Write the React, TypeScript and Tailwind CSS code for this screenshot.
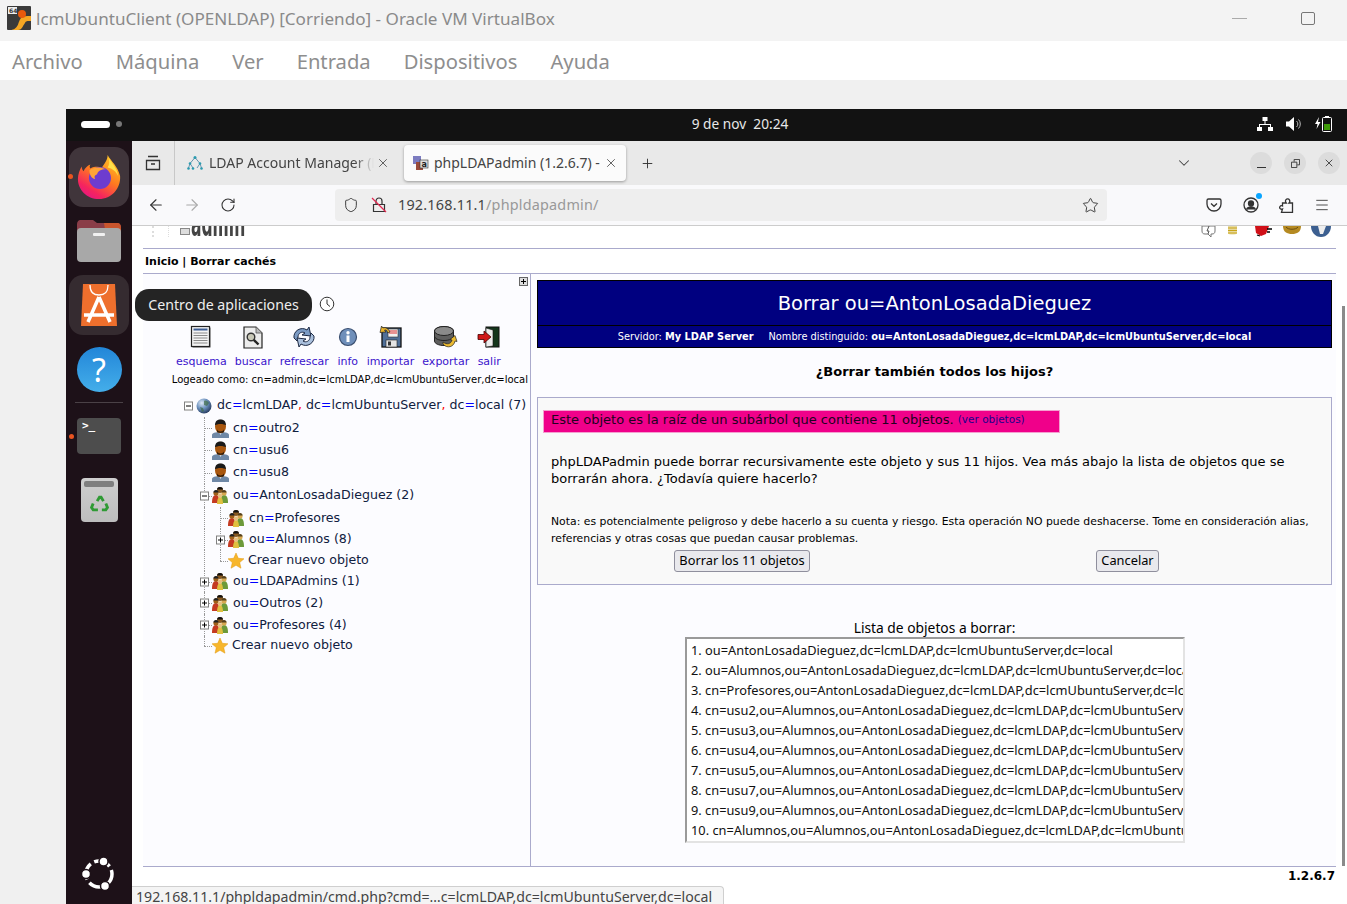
import { ArrowLeft, ArrowRight, ChevronDown, Menu, Plus, RotateCw, Shield, Star, X } from "lucide-react";

const deja = "font-['DejaVu_Sans',sans-serif]";
const ui = "font-['Noto_Sans',sans-serif]";

const menus = ["Archivo", "Máquina", "Ver", "Entrada", "Dispositivos", "Ayuda"];

const toolbarItems = [
  { label: "esquema", icon: SchemaIcon },
  { label: "buscar", icon: SearchDocIcon },
  { label: "refrescar", icon: RefreshIcon },
  { label: "info", icon: InfoIcon },
  { label: "importar", icon: ImportIcon },
  { label: "exportar", icon: ExportIcon },
  { label: "salir", icon: LogoutIcon },
];

const deleteList = [
  "1. ou=AntonLosadaDieguez,dc=lcmLDAP,dc=lcmUbuntuServer,dc=local",
  "2. ou=Alumnos,ou=AntonLosadaDieguez,dc=lcmLDAP,dc=lcmUbuntuServer,dc=local",
  "3. cn=Profesores,ou=AntonLosadaDieguez,dc=lcmLDAP,dc=lcmUbuntuServer,dc=local",
  "4. cn=usu2,ou=Alumnos,ou=AntonLosadaDieguez,dc=lcmLDAP,dc=lcmUbuntuServer,dc=local",
  "5. cn=usu3,ou=Alumnos,ou=AntonLosadaDieguez,dc=lcmLDAP,dc=lcmUbuntuServer,dc=local",
  "6. cn=usu4,ou=Alumnos,ou=AntonLosadaDieguez,dc=lcmLDAP,dc=lcmUbuntuServer,dc=local",
  "7. cn=usu5,ou=Alumnos,ou=AntonLosadaDieguez,dc=lcmLDAP,dc=lcmUbuntuServer,dc=local",
  "8. cn=usu7,ou=Alumnos,ou=AntonLosadaDieguez,dc=lcmLDAP,dc=lcmUbuntuServer,dc=local",
  "9. cn=usu9,ou=Alumnos,ou=AntonLosadaDieguez,dc=lcmLDAP,dc=lcmUbuntuServer,dc=local",
  "10. cn=Alumnos,ou=Alumnos,ou=AntonLosadaDieguez,dc=lcmLDAP,dc=lcmUbuntuServer,dc=local",
];

function SchemaIcon() {
  return (
    <svg width="24" height="24" viewBox="0 0 24 24">
      <rect x="3.500" y="2.500" width="18" height="20" fill="#555" />
      <rect x="2.500" y="1.500" width="18" height="20" fill="#f4f4f4" stroke="#222" strokeWidth="1.200" />
      <rect x="4.500" y="3.500" width="14" height="2" fill="#3f5f96" />
      <path d="M4.500 8h14M4.500 10.500h14M4.500 13h14M4.500 15.500h14M4.500 18h14" stroke="#8a8a8a" strokeWidth="1.100" />
    </svg>
  );
}

function SearchDocIcon() {
  return (
    <svg width="24" height="24" viewBox="0 0 24 24">
      <path d="M3 2h12l6 6v15H3z" fill="#ececec" stroke="#222" strokeWidth="1.200" />
      <path d="M15 2v6h6" fill="#bbb" stroke="#555" strokeWidth=".8" />
      <circle cx="10" cy="12" r="3.800" fill="#c9c9b8" stroke="#333" strokeWidth="1.400" />
      <path d="M12.800 14.800l4.700 4.700" stroke="#222" strokeWidth="2.400" />
    </svg>
  );
}

function RefreshIcon() {
  return (
    <svg width="24" height="24" viewBox="0 0 24 24">
      <path d="M2 13C1 6 9 1 15 5l2-3 2 9-9-1 3-2c-3-2-7 0-7 4l-1 4z" fill="#7c9bc4" stroke="#1e2a44" strokeWidth="1" />
      <path d="M22 11c1 7-7 12-13 8l-2 3-2-9 9 1-3 2c3 2 7 0 7-4l1-4z" fill="#a9bfdc" stroke="#1e2a44" strokeWidth="1" />
    </svg>
  );
}

function InfoIcon() {
  return (
    <svg width="22" height="22" viewBox="0 0 22 22">
      <circle cx="11" cy="11" r="8.500" fill="#6f8fba" stroke="#3b4f70" strokeWidth="1.200" />
      <rect x="9.500" y="9.500" width="3" height="6.500" fill="#fff" />
      <circle cx="11" cy="6.700" r="1.700" fill="#fff" />
    </svg>
  );
}

function ImportIcon() {
  return (
    <svg width="24" height="24" viewBox="0 0 24 24">
      <rect x="3" y="3" width="19" height="19" fill="#4f6f98" stroke="#111" strokeWidth="1.300" />
      <rect x="9" y="4" width="10" height="8" fill="#f2f2f2" stroke="#333" strokeWidth=".6" />
      <path d="M10 6h8M10 8h8" stroke="#d33" strokeWidth="1" />
      <rect x="7" y="15" width="11" height="7" fill="#e4e4e4" stroke="#222" strokeWidth=".6" />
      <rect x="9" y="16.500" width="3" height="4" fill="#333" />
      <path d="M11 7c-2-4-5-5-7-4L2.500 1 1 7.500l6-.5L5.500 5c2-.5 3 1 3 3z" fill="#e8b32b" stroke="#222" strokeWidth=".7" />
    </svg>
  );
}

function ExportIcon() {
  return (
    <svg width="26" height="24" viewBox="0 0 26 24">
      <ellipse cx="11" cy="6" rx="9.500" ry="4.500" fill="#8a8a8a" stroke="#222" />
      <path d="M1.500 6v10c0 2.500 4.200 4.500 9.500 4.500s9.500-2 9.500-4.500V6" fill="#5e5e5e" stroke="#222" />
      <ellipse cx="11" cy="6" rx="9.500" ry="4.500" fill="#8a8a8a" stroke="#222" />
      <path d="M1.500 11c0 2.500 4.200 4.500 9.500 4.500s9.500-2 9.500-4.500" fill="none" stroke="#222" />
      <path d="M10 17c4 3 8 2 9-2l-2-.5 5-4 2 6-2-.5c-1 6-8 8-12 3z" fill="#eab92f" stroke="#222" strokeWidth=".7" />
    </svg>
  );
}

function LogoutIcon() {
  return (
    <svg width="24" height="24" viewBox="0 0 24 24">
      <rect x="9" y="2" width="13" height="20" fill="#14361c" stroke="#111" />
      <path d="M9 3l7 2v16l-7 1z" fill="#ededed" stroke="#111" strokeWidth=".6" />
      <path d="M1 9.500h6V6l7 6-7 6v-3.500H1z" fill="#d01818" stroke="#400" strokeWidth=".8" />
    </svg>
  );
}

function UserIcon() {
  return (
    <svg width="17" height="19" viewBox="0 0 17 19">
      <path d="M0 19v-3c0-2 3-3 8.500-3S17 14 17 16v3z" fill="#6f88a6" />
      <path d="M7 13h3l-1.500 3z" fill="#e8eef4" />
      <ellipse cx="8.500" cy="7.500" rx="5.500" ry="6.800" fill="#a8560e" />
      <path d="M3 6.500C3 2 5.500.5 8.500.5S14 2 14 6.500c-2-2-9-2-11 0z" fill="#1a1a1a" />
      <path d="M5 10.500c1.500 2.500 5.500 2.500 7 0v2.500c-1.500 1.200-5.500 1.200-7 0z" fill="#3a2008" />
    </svg>
  );
}

function GroupIcon() {
  return (
    <svg width="16" height="17" viewBox="0 0 16 17">
      <circle cx="8" cy="3" r="3" fill="#8a5a20" />
      <path d="M5 2.500C5 .8 6.500 0 8 0s3 .8 3 2.500z" fill="#111" />
      <path d="M0 16c0-5 1-8 4-8s3 3 3 8z" fill="#c43a22" />
      <circle cx="4" cy="6" r="2.600" fill="#a06018" />
      <path d="M1.400 5.500C1.400 4 2.500 3 4 3s2.600 1 2.600 2.500z" fill="#222" />
      <path d="M9 16c0-5 0-8 3-8s4 3 4 8z" fill="#6d9a3a" />
      <circle cx="12" cy="6" r="2.600" fill="#d8a850" />
      <path d="M9.400 5.500C9.400 4 10.500 3 12 3s2.600 1 2.600 2.500z" fill="#55401c" />
      <path d="M5 17c0-4 1-7 3-7s3 3 3 7z" fill="#e0c040" />
      <circle cx="8" cy="8.500" r="2.300" fill="#e8c080" />
    </svg>
  );
}

function StarIcon() {
  return (
    <svg className="shrink-0" width="16" height="16" viewBox="0 0 16 16">
      <path d="M8 0l2.300 5.300 5.700.5-4.300 3.800 1.300 5.600L8 12.300 3 15.200l1.300-5.600L0 5.800l5.700-.5z" fill="#f7b62c" stroke="#e39a10" strokeWidth=".5" />
    </svg>
  );
}

function GlobeIcon() {
  return (
    <svg className="shrink-0" width="16" height="16" viewBox="0 0 16 16">
      <defs>
        <radialGradient id="globe" cx="35%" cy="30%" r="75%">
          <stop offset="0" stopColor="#dfe9f5" />
          <stop offset=".5" stopColor="#6e93c0" />
          <stop offset="1" stopColor="#24395c" />
        </radialGradient>
      </defs>
      <circle cx="8" cy="8" r="7.500" fill="url(#globe)" />
      <path d="M8 3c2-1 4 0 5 2l-2 3-3-1zM4 9l3 1 1 3-2 1z" fill="#3f6b46" opacity=".7" />
    </svg>
  );
}

function Expander({ open }: { open?: boolean }) {
  return (
    <span className="flex h-[9px] w-[9px] items-center justify-center border border-[#808080] bg-white">
      <svg width="7" height="7" viewBox="0 0 7 7">
        <path d={open ? "M1 3.500h5" : "M1 3.500h5M3.500 1v5"} stroke="#000" strokeWidth="1" />
      </svg>
    </span>
  );
}

// one column of the dotted tree guide
function Guide({ tee, last, expander, open }: { tee?: boolean; last?: boolean; expander?: boolean; open?: boolean }) {
  return (
    <div className="relative w-4 shrink-0 self-stretch">
      <div className={last ? "absolute left-[8px] top-0 h-1/2 border-l border-dotted border-[#999]" : "absolute left-[8px] top-0 bottom-0 border-l border-dotted border-[#999]"} />
      {tee && <div className="absolute left-[8px] top-1/2 w-[8px] border-t border-dotted border-[#999]" />}
      {expander && (
        <div className="absolute left-[4px] top-1/2 -translate-y-1/2">
          <Expander open={open} />
        </div>
      )}
    </div>
  );
}

function Dn({ attr, value, count }: { attr: string; value: string; count?: string }) {
  return (
    <span className="whitespace-nowrap">
      {attr}
      <span className="text-[#0000ff]">=</span>
      {value}
      {count && <span> {count}</span>}
    </span>
  );
}

function LdapTree() {
  return (
    <div className={`mt-[8px] text-[12.600px] text-[#102040] ${deja}`}>
      <div className="flex h-[23px] items-center">
        <div className="w-[37px] shrink-0" />
        <div className="relative h-full w-4 shrink-0">
          <div className="absolute left-[4px] top-1/2 -translate-y-1/2">
            <Expander open />
          </div>
        </div>
        <GlobeIcon />
        <span className="ml-[5px] whitespace-nowrap">
          dc<span className="text-[#0000ff]">=</span>lcmLDAP<span className="text-[#ff0000]">,</span> dc<span className="text-[#0000ff]">=</span>lcmUbuntuServer<span className="text-[#ff0000]">,</span> dc<span className="text-[#0000ff]">=</span>local (7)
        </span>
      </div>
      {[
        { text: "outro2", h: "h-[22px]" },
        { text: "usu6", h: "h-[22px]" },
        { text: "usu8", h: "h-[23px]" },
      ].map(r => (
        <div key={r.text} className={`flex items-center ${r.h}`}>
          <div className="w-[53px] shrink-0" />
          <Guide tee />
          <UserIcon />
          <span className="ml-[4px]">
            <Dn attr="cn" value={r.text} />
          </span>
        </div>
      ))}
      <div className="flex h-[23px] items-center">
        <div className="w-[53px] shrink-0" />
        <Guide tee expander open />
        <GroupIcon />
        <span className="ml-[5px]">
          <Dn attr="ou" value="AntonLosadaDieguez" count="(2)" />
        </span>
      </div>
      <div className="flex h-[22px] items-center">
        <div className="w-[53px] shrink-0" />
        <Guide />
        <Guide tee />
        <GroupIcon />
        <span className="ml-[5px]">
          <Dn attr="cn" value="Profesores" />
        </span>
      </div>
      <div className="flex h-[21px] items-center">
        <div className="w-[53px] shrink-0" />
        <Guide />
        <Guide tee expander />
        <GroupIcon />
        <span className="ml-[5px]">
          <Dn attr="ou" value="Alumnos" count="(8)" />
        </span>
      </div>
      <div className="flex h-[21px] items-center">
        <div className="w-[53px] shrink-0" />
        <Guide />
        <Guide tee last />
        <StarIcon />
        <span className="ml-[4px]">Crear nuevo objeto</span>
      </div>
      {[
        { value: "LDAPAdmins", count: "(1)", h: "h-[21px]" },
        { value: "Outros", count: "(2)", h: "h-[22px]" },
        { value: "Profesores", count: "(4)", h: "h-[22px]" },
      ].map(r => (
        <div key={r.value} className={`flex items-center ${r.h}`}>
          <div className="w-[53px] shrink-0" />
          <Guide tee expander />
          <GroupIcon />
          <span className="ml-[5px]">
            <Dn attr="ou" value={r.value} count={r.count} />
          </span>
        </div>
      ))}
      <div className="flex h-[19px] items-center">
        <div className="w-[53px] shrink-0" />
        <Guide tee last />
        <StarIcon />
        <span className="ml-[4px]">Crear nuevo objeto</span>
      </div>
    </div>
  );
}

function LeftPanel() {
  return (
    <div className="relative w-[388px] shrink-0 border-r border-[#aaaacc]">
      <div className="absolute right-[2px] top-[3px] flex h-[9px] w-[9px] items-center justify-center border border-[#666] bg-[#ddd]">
        <svg width="7" height="7" viewBox="0 0 7 7">
          <path d="M1 3.500h5M3.500 1v5" stroke="#000" />
        </svg>
      </div>
      <div className="flex h-[51px] items-end justify-end pb-[13px] pr-[195px]">
        <span className="mr-[8px] mb-[4px] h-[6px] w-[3px] bg-[#333]" />
        <svg width="16" height="16" viewBox="0 0 16 16" fill="#fff" stroke="#333" strokeWidth="1">
          <circle cx="8" cy="8" r="6.800" />
          <path d="M8 3.500V8l3 2.500" fill="none" />
        </svg>
      </div>
      <div className={`flex gap-2 pl-[33px] text-[11px] text-[#3a14cc] ${deja}`}>
        {toolbarItems.map(item => {
          const Icon = item.icon;
          return (
            <div key={item.label} className="flex flex-col items-center">
              <div className="flex h-[24px] items-center justify-center">
                <Icon />
              </div>
              <span className="mt-[6px] whitespace-nowrap leading-[13px]">{item.label}</span>
            </div>
          );
        })}
      </div>
      <div className={`mt-[5px] whitespace-nowrap pr-[2px] text-right text-[10px] leading-[13px] text-black ${deja}`}>
        Logeado como: cn=admin,dc=lcmLDAP,dc=lcmUbuntuServer,dc=local
      </div>
      <LdapTree />
    </div>
  );
}

function RightPanel() {
  return (
    <div className={`flex min-w-0 flex-1 flex-col pl-[6px] pr-[4px] pt-[6px] text-black ${deja}`}>
      <div className="border border-black bg-[#000080] text-white">
        <div className="flex h-[45px] items-center justify-center border-b border-black pt-[2px] text-[19.500px]">Borrar ou=AntonLosadaDieguez</div>
        <div className="flex h-[21px] items-center justify-center whitespace-nowrap pt-[2px] text-[9.800px]">
          <span>
            Servidor: <b>My LDAP Server</b>
          </span>
          <span className="ml-[15px]">
            Nombre distinguido: <b>ou=AntonLosadaDieguez,dc=lcmLDAP,dc=lcmUbuntuServer,dc=local</b>
          </span>
        </div>
      </div>
      <div className="mt-[16px] text-center text-[13px] font-bold leading-[16px]">¿Borrar también todos los hijos?</div>
      <div className="mt-[17px] h-[188px] border border-[#aaaacc] bg-[#f9f9f9] px-[5px] pt-[12px]">
        <div className="flex h-[23px] w-[517px] items-start border border-[#f4a0d0] bg-[#f0008a] pl-[7px] text-[13px] leading-[17px] text-[#200020]">
          Este objeto es la raíz de un subárbol que contiene 11 objetos.
          <span className="ml-[4px] text-[10.500px] text-[#1a008a]">(ver objetos)</span>
        </div>
        <p className="mt-[20px] pl-[8px] text-[13px] leading-[17px]">
          phpLDAPadmin puede borrar recursivamente este objeto y sus 11 hijos. Vea más abajo la lista de objetos que se borrarán ahora. ¿Todavía quiere hacerlo?
        </p>
        <p className="mt-[26px] pl-[8px] text-[10.850px] leading-[17px]">
          Nota: es potencialmente peligroso y debe hacerlo a su cuenta y riesgo. Esta operación NO puede deshacerse. Tome en consideración alias, referencias y otras cosas que puedan causar problemas.
        </p>
        <div className="mt-[3px] flex">
          <button className={`ml-[131px] h-[22px] w-[136px] rounded-[3px] border border-[#8f8f9d] bg-[#e9e9ed] text-[12.800px] ${ui}`}>Borrar los 11 objetos</button>
          <button className={`ml-[286px] h-[22px] w-[63px] rounded-[3px] border border-[#8f8f9d] bg-[#e9e9ed] text-[12.800px] ${ui}`}>Cancelar</button>
        </div>
      </div>
      <div className={`mt-[34px] text-center text-[13.800px] leading-[18px] ${ui}`}>Lista de objetos a borrar:</div>
      <div className={`ml-[148px] h-[206px] w-[500px] overflow-hidden border-2 border-b-[#e3e3e3] border-l-[#9a9a9a] border-r-[#e3e3e3] border-t-[#9a9a9a] bg-white pl-[4px] pt-[1px] text-[12.800px] leading-[20px] text-[#111] ${ui}`}>
        {deleteList.map(line => (
          <div key={line} className="whitespace-nowrap">
            {line}
          </div>
        ))}
      </div>
    </div>
  );
}

function FirefoxLogo() {
  return (
    <svg width="46" height="46" viewBox="0 0 48 48">
      <defs>
        <linearGradient id="ffBody" x1=".8" y1="0" x2=".2" y2="1">
          <stop offset="0" stopColor="#ffc928" />
          <stop offset=".45" stopColor="#ff7a1f" />
          <stop offset=".8" stopColor="#f5245e" />
          <stop offset="1" stopColor="#e31587" />
        </linearGradient>
      </defs>
      <path d="M33 1c3 6 11 12 13 22 1 13-9 24-22 24C11 47 2 37 2 26c0-5 2-10 4-13 0 3 1 4 2 5 1-3 4-6 7-7-1 2-1 3 0 4 4-2 8-2 12-1 3-4 6-8 6-13z" fill="url(#ffBody)" />
      <circle cx="25" cy="25" r="11.500" fill="#6d3ccf" />
      <path d="M14 17c4-3 11-4 17-1-5 0-8 2-9 5-3 1-3 3-2 5-4 0-6-5-6-9z" fill="#ffa436" />
      <path d="M34 4c3 6 9 10 10 19-2-5-6-8-11-9 2-3 2-6 1-10z" fill="#ffe04a" />
    </svg>
  );
}

function Dock() {
  return (
    <div className="flex w-[66px] shrink-0 flex-col items-center bg-[#1d1118]">
      <div className="relative mt-[6px] flex h-[60px] w-[60px] items-center justify-center rounded-[14px] bg-[#40353b]">
        <FirefoxLogo />
        <span className="absolute -left-[1px] top-[27px] h-[5px] w-[5px] rounded-full bg-[#e95420]" />
      </div>
      <svg className="mt-[13px]" width="46" height="42" viewBox="0 0 46 42">
        <path d="M1 5c0-3 1-5 4-5h12l4 3h20c3 0 4 2 4 5v8H1z" fill="#8a3d48" />
        <path d="M28 3h13c3 0 4 2 4 5v8H30z" fill="#c9552d" />
        <rect x="1" y="8" width="44" height="34" rx="4" fill="#a8a8a8" />
        <rect x="17" y="13" width="12" height="3" rx="1" fill="#f1f1f1" />
      </svg>
      <div className="mt-[13px] flex h-[60px] w-[60px] items-center justify-center rounded-[14px] bg-[#352b30]">
        <svg width="36" height="42" viewBox="0 0 36 42">
          <path d="M2 0h32l2 42H0z" fill="#ee6f2d" />
          <path d="M9 1c0 8 4 10 9 10s9-2 9-10" fill="none" stroke="#fff" strokeWidth="1.300" />
          <path d="M18 13L7 38M18 13l11 25M3 31h30" fill="none" stroke="#fff" strokeWidth="3.500" />
        </svg>
      </div>
      <div className="mt-[12px] flex h-[45px] w-[45px] items-center justify-center rounded-full bg-gradient-to-b from-[#2286d8] to-[#44aeea]">
        <span className={`text-[32px] leading-none text-white ${ui}`}>?</span>
      </div>
      <div className="mt-[10px] h-px w-[48px] bg-[#4a4146]" />
      <div className="relative mt-[15px] h-[36px] w-[44px] rounded-[4px] bg-[#4d4d4d]">
        <span className="absolute left-[5px] top-[1px] font-['DejaVu_Sans_Mono',monospace] text-[11px] font-bold leading-[14px] text-white">&gt;_</span>
        <span className="absolute -left-[8px] top-[16px] h-[5px] w-[5px] rounded-full bg-[#e95420]" />
      </div>
      <div className="mt-[24px] flex h-[44px] w-[37px] flex-col items-center rounded-[4px] bg-gradient-to-b from-[#cfcfcf] to-[#bdbdbd] pt-[3px]">
        <div className="h-[6px] w-[30px] rounded-[2px] bg-[#7f7f7f]" />
        <svg className="mt-[7px]" width="19" height="19" viewBox="0 0 24 24" fill="none" stroke="#2f9a34" strokeWidth="3.600">
          <path d="M9 9l3-5h2l3 5M20 12l2 5-2 3h-5M4 12l-2 5 2 3h6" />
        </svg>
      </div>
      <svg className="mb-[12px] mt-auto" width="36" height="36" viewBox="0 0 36 36">
        <circle cx="18" cy="18" r="13" fill="none" stroke="#fff" strokeWidth="3.500" strokeDasharray="17 4" strokeDashoffset="7" />
        <circle cx="22.500" cy="5.500" r="4.500" fill="#fff" stroke="#1d1118" strokeWidth="1.500" />
        <circle cx="5" cy="18" r="4.500" fill="#fff" stroke="#1d1118" strokeWidth="1.500" />
        <circle cx="24" cy="30" r="4.500" fill="#fff" stroke="#1d1118" strokeWidth="1.500" />
      </svg>
    </div>
  );
}

function BrowserTabs() {
  return (
    <div className={`flex h-[44px] items-center bg-[#e9e9e9] text-[14px] text-[#444] ${ui}`}>
      <div className="flex h-full w-[43px] items-center justify-center border-r border-[#c8c8c8]">
        <svg width="18" height="18" viewBox="0 0 18 18" fill="none" stroke="#333" strokeWidth="1.300">
          <path d="M4 2.500h10M2.500 6.500h13v9h-13zM7 10h4" />
        </svg>
      </div>
      <div className="flex h-full w-[229px] items-center pl-[12px]">
        <svg width="16" height="16" viewBox="0 0 16 16" fill="none" stroke="#5a8aa8" strokeWidth=".9">
          <path d="M8 2.500L3 8.500M8 2.500L13 8.500M3 8.500L1.500 13M3 8.500L6 13M13 8.500L10 13M13 8.500L14.500 13" />
          <g fill="#2b9bb0" stroke="none">
            <circle cx="8" cy="2.500" r="1.500" />
            <circle cx="3" cy="8.500" r="1.300" />
            <circle cx="13" cy="8.500" r="1.300" />
            <circle cx="1.500" cy="13.500" r="1.300" />
            <circle cx="6" cy="13.500" r="1.300" />
            <circle cx="14.500" cy="13.500" r="1.300" />
          </g>
        </svg>
        <span className="mb-[2px] ml-[6px] w-[165px] overflow-hidden whitespace-nowrap [mask-image:linear-gradient(to_right,black_88%,transparent)]">LDAP Account Manager (LDAP)</span>
        <X className="ml-[2px]" size={14} strokeWidth={1.4} />
      </div>
      <div className="flex h-[36px] w-[222px] items-center rounded-[4px] bg-[#fbfbfb] pl-[9px] shadow-[0_1px_3px_rgba(0,0,0,0.35)]">
        <svg width="16" height="16" viewBox="0 0 16 16">
          <rect x="0" y="1" width="8" height="8" fill="#7c7cc0" />
          <rect x="3" y="7" width="7" height="8" fill="#9a4a3a" />
          <rect x="7" y="5" width="8" height="8" fill="#ddd" stroke="#333" strokeWidth=".6" />
          <text x="8.500" y="11.500" fontSize="8" fontWeight="700" fill="#222" fontFamily="DejaVu Sans">a</text>
        </svg>
        <span className="mb-[2px] ml-[5px] w-[170px] overflow-hidden whitespace-nowrap">phpLDAPadmin (1.2.6.7) - Dele</span>
        <X size={14} strokeWidth={1.4} />
      </div>
      <Plus className="ml-[14px]" size={15} strokeWidth={1.5} color="#333" />
      <ChevronDown className="ml-[520px]" size={18} strokeWidth={1.4} color="#444" />
      <div className="ml-[57px] flex gap-3">
        <div className="flex h-[22px] w-[22px] items-end justify-center rounded-full bg-[#dcdcdc] pb-[6px]">
          <div className="h-px w-[9px] bg-[#333]" />
        </div>
        <div className="relative flex h-[22px] w-[22px] items-center justify-center rounded-full bg-[#dcdcdc]">
          <svg width="9" height="9" viewBox="0 0 10 10" fill="none" stroke="#333">
            <path d="M.5 3.500h6v6h-6zM3.500 3V.5h6v6H7" />
          </svg>
        </div>
        <div className="flex h-[22px] w-[22px] items-center justify-center rounded-full bg-[#dcdcdc]">
          <X size={12} strokeWidth={1.7} color="#333" />
        </div>
      </div>
    </div>
  );
}

function UrlBar() {
  return (
    <div className="flex h-[41px] items-center border-b border-[#cccccc] bg-[#f9f9fb] text-[#333]">
      <ArrowLeft className="ml-[15px]" size={18} strokeWidth={1.5} />
      <ArrowRight className="ml-[18px] text-[#aaa]" size={18} strokeWidth={1.5} />
      <RotateCw className="ml-[19px]" size={16} strokeWidth={1.6} />
      <div className={`ml-[99px] flex h-[32px] w-[772px] items-center rounded-[4px] bg-[#eeeeee] pl-[8px] text-[14.400px] ${ui}`}>
        <Shield size={16} strokeWidth={1.4} />
        <svg className="ml-[12px]" width="16" height="16" viewBox="0 0 16 16" fill="none" stroke="#333" strokeWidth="1.200">
          <path d="M2.500 7.500h11v7h-11zM5 7.500V4a3 3 0 0 1 6 0v3.500" />
          <path d="M1 1l14 14" stroke="#e22850" />
        </svg>
        <span className="ml-[11px] tracking-[0.2px] text-[#444]">
          192.168.11.1<span className="text-[#999]">/phpldapadmin/</span>
        </span>
        <Star className="ml-auto mr-[8px]" size={17} strokeWidth={1.3} />
      </div>
      <div className="ml-[98px] flex h-[18px] w-[18px] items-center justify-center">
        <svg width="16" height="16" viewBox="0 0 16 16" fill="none" stroke="#333" strokeWidth="1.300">
          <path d="M2.500 2h11A1.500 1.500 0 0 1 15 3.500V7a7 7 0 0 1-14 0V3.500A1.500 1.500 0 0 1 2.500 2z" />
          <path d="M5 6.500l3 2.800 3-2.800" />
        </svg>
      </div>
      <div className="relative ml-[20px] h-[16px] w-[16px]">
        <svg width="16" height="16" viewBox="0 0 16 16" fill="none" stroke="#333" strokeWidth="1.300">
          <circle cx="8" cy="8" r="7" />
          <circle cx="8" cy="6.500" r="2.500" fill="#333" />
          <path d="M3.500 12.500c1-2 2.500-2.500 4.500-2.500s3.500.5 4.500 2.500" fill="#333" />
        </svg>
        <span className="absolute -right-[3px] -top-[4px] h-[6px] w-[6px] rounded-full bg-[#0aa5ff]" />
      </div>
      <svg className="ml-[20px]" width="16" height="16" viewBox="0 0 16 16" fill="none" stroke="#333" strokeWidth="1.300">
        <path d="M2.500 15.300h11V6H10c.9-1 1-2.200.4-3.200-.7-1.100-2.500-1.300-3.400-.2-.8 1-.6 2.300.2 3.400H3.500v3c-1-.5-2-.3-2.500.5s-.2 2 .6 2.500c.6.400 1.300.3 1.900 0z" />
      </svg>
      <Menu className="ml-[19px]" size={16} strokeWidth={1.3} />
    </div>
  );
}

function PageTop() {
  return (
    <div className="flex h-[22px] overflow-hidden px-[11px]">
      <div className="relative h-[11px] w-full overflow-hidden">
        <div className="absolute left-[9px] top-0 h-full border-l-2 border-dotted border-[#ddd]" />
        <div className="absolute left-[25px] top-0 h-full border-l border-dotted border-[#ddd]" />
        <div className="absolute left-[37px] top-[2px] h-[7px] w-[10px] border border-[#888] bg-[#ddd]" />
        <span className={`absolute left-[48px] -top-[5px] origin-bottom-left scale-x-[0.74] scale-y-[1.6] text-[21px] font-bold leading-[25px] text-[#444] ${deja}`}>admin</span>
        <svg className="absolute right-[5px] top-0" width="130" height="11" viewBox="0 0 130 11">
          <path d="M1 0v5c0 2 1 3 3 3h3l3 3V8h1c2 0 3-1 3-3V0z" fill="#fff" stroke="#777" />
          <path d="M8 0L6 5h2l-1 3" fill="none" stroke="#555" />
          <path d="M27 0h9v7c0 2-9 2-9 0z" fill="#e6d9a0" />
          <path d="M27 2h9M27 4.500h9M27 7h9" stroke="#c9a417" />
          <path d="M54 0h14l-3 8-5 2-5-3z" fill="#d01018" />
          <path d="M66 3h5M66 6h3M56 9l3 1" stroke="#000" strokeWidth="1.300" />
          <path d="M82 0h18c0 6-4 8-9 8s-9-2-9-8z" fill="#b58a22" />
          <path d="M85 1c2 3 10 3 12 0" fill="none" stroke="#6b4e10" />
          <path d="M110 0h20c0 6-4 11-10 11S110 6 110 0z" fill="#3c5f90" />
          <path d="M117 0h8l-3 8h-3z" fill="#eee" />
        </svg>
      </div>
    </div>
  );
}

function BrowserPage() {
  return (
    <div className="relative flex flex-1 flex-col overflow-hidden bg-white">
      <PageTop />
      <div className="mx-[11px] flex h-[26px] items-center border-y border-[#aaaacc] px-[2px] pt-[2px]">
        <span className={`text-[11px] font-bold text-black ${deja}`}>Inicio | Borrar cachés</span>
      </div>
      <div className="mx-[11px] flex h-[592px] bg-[#fcfcff]">
        <LeftPanel />
        <RightPanel />
      </div>
      <div className={`mx-[11px] border-t border-[#aaaacc] pr-px pt-[1px] text-right text-[12px] font-bold leading-[16px] text-black ${deja}`}>1.2.6.7</div>
      <div className="absolute bottom-[38px] right-[2px] top-[80px] w-[3px] bg-[#8a8a8a]" />
      <div className={`absolute bottom-0 left-0 h-[18px] w-[592px] overflow-hidden whitespace-nowrap rounded-tr-[4px] border-r border-t border-[#cfcfcf] bg-[#f4f4f4] pl-[4px] text-[14.150px] leading-[20px] text-[#444] ${ui}`}>
        192.168.11.1/phpldapadmin/cmd.php?cmd=…c=lcmLDAP,dc=lcmUbuntuServer,dc=local
      </div>
    </div>
  );
}

export default function App() {
  return (
    <div className={`flex h-[904px] w-[1347px] flex-col overflow-hidden bg-[#f0f0f0] ${ui}`}>
      <div className="flex h-[41px] shrink-0 items-center bg-[#f3f3f3] pb-[5px] pl-[7px] text-[17.100px] text-[#8a8a8a]">
        <svg width="24" height="24" viewBox="0 0 24 24">
          <rect width="24" height="24" rx="1" fill="#3a3a3a" />
          <path d="M3 24c9 0 8-9 11-12 2-2 5-2 10-2v5c-4 0-5 0-6 2-3 4-3 7-7 7z" fill="#f5a623" />
          <circle cx="15" cy="8" r="4" fill="#e8590c" />
          <rect x="1" y="1" width="9" height="7" fill="#eee" />
          <text x="2" y="7" fontSize="6" fontWeight="700" fill="#333" fontFamily="DejaVu Sans">64</text>
        </svg>
        <span className="ml-[5px] mt-[2px] whitespace-nowrap">lcmUbuntuClient (OPENLDAP) [Corriendo] - Oracle VM VirtualBox</span>
        <div className="ml-auto h-px w-[15px] bg-[#aaa]" />
        <div className="ml-[54px] mr-[32px] h-[13px] w-[14px] rounded-[2px] border border-[#777]" />
      </div>
      <div className="flex h-[39px] shrink-0 items-center gap-[33px] bg-white pl-[12px] pt-[1px] text-[20.200px] text-[#8e8e8e]">
        {menus.map(m => (
          <span key={m}>{m}</span>
        ))}
      </div>
      <div className="ml-[66px] mt-[29px] flex min-h-0 flex-1 flex-col">
        <div className="relative flex h-[32px] shrink-0 items-center justify-center bg-[#121212] pb-[2px] pl-[67px] text-[13.700px] text-[#e8e8e8]">
          <div className="absolute left-[15px] flex items-center gap-[6px]">
            <span className="h-[7px] w-[29px] rounded-full bg-white" />
            <span className="h-[6px] w-[6px] rounded-full bg-[#777]" />
          </div>
          <span className="whitespace-pre">9 de nov  20:24</span>
          <div className="absolute right-[15px] flex items-center gap-[13px]">
            <svg width="16" height="14" viewBox="0 0 16 14" fill="#fff">
              <rect x="5.500" y="0" width="5" height="4" />
              <rect x="0" y="10" width="5" height="4" />
              <rect x="11" y="10" width="5" height="4" />
              <path d="M7.500 4h1v3h5.500v3h-1V8H3v2H2V7h5.500z" />
            </svg>
            <svg width="16" height="14" viewBox="0 0 16 14" fill="none">
              <path d="M0 4.500h3L8 0v14l-5-4.500H0z" fill="#fff" />
              <path d="M10.500 4a4 4 0 0 1 0 6M12.500 2.500a6.500 6.500 0 0 1 0 9" stroke="#bbb" strokeWidth="1" />
            </svg>
            <svg width="17" height="16" viewBox="0 0 17 16">
              <path d="M4 1L0 8h2.500L1.500 13 5.500 6H3z" fill="#fff" />
              <rect x="7.500" y="1.500" width="9" height="14" rx="1" fill="#121212" stroke="#fff" />
              <rect x="10" y="0" width="4" height="1.500" fill="#fff" />
              <rect x="9" y="8" width="6" height="6" fill="#3e9a08" />
            </svg>
          </div>
        </div>
        <div className="flex min-h-0 flex-1">
          <Dock />
          <div className="flex min-w-0 flex-1 flex-col">
            <BrowserTabs />
            <UrlBar />
            <BrowserPage />
          </div>
        </div>
      </div>
      <div className={`absolute left-[135px] top-[289px] flex h-[32px] w-[177px] items-center justify-center rounded-[14px] bg-[#242424] pb-px text-[14.200px] text-[#eeeeee] ${ui}`}>Centro de aplicaciones</div>
    </div>
  );
}
